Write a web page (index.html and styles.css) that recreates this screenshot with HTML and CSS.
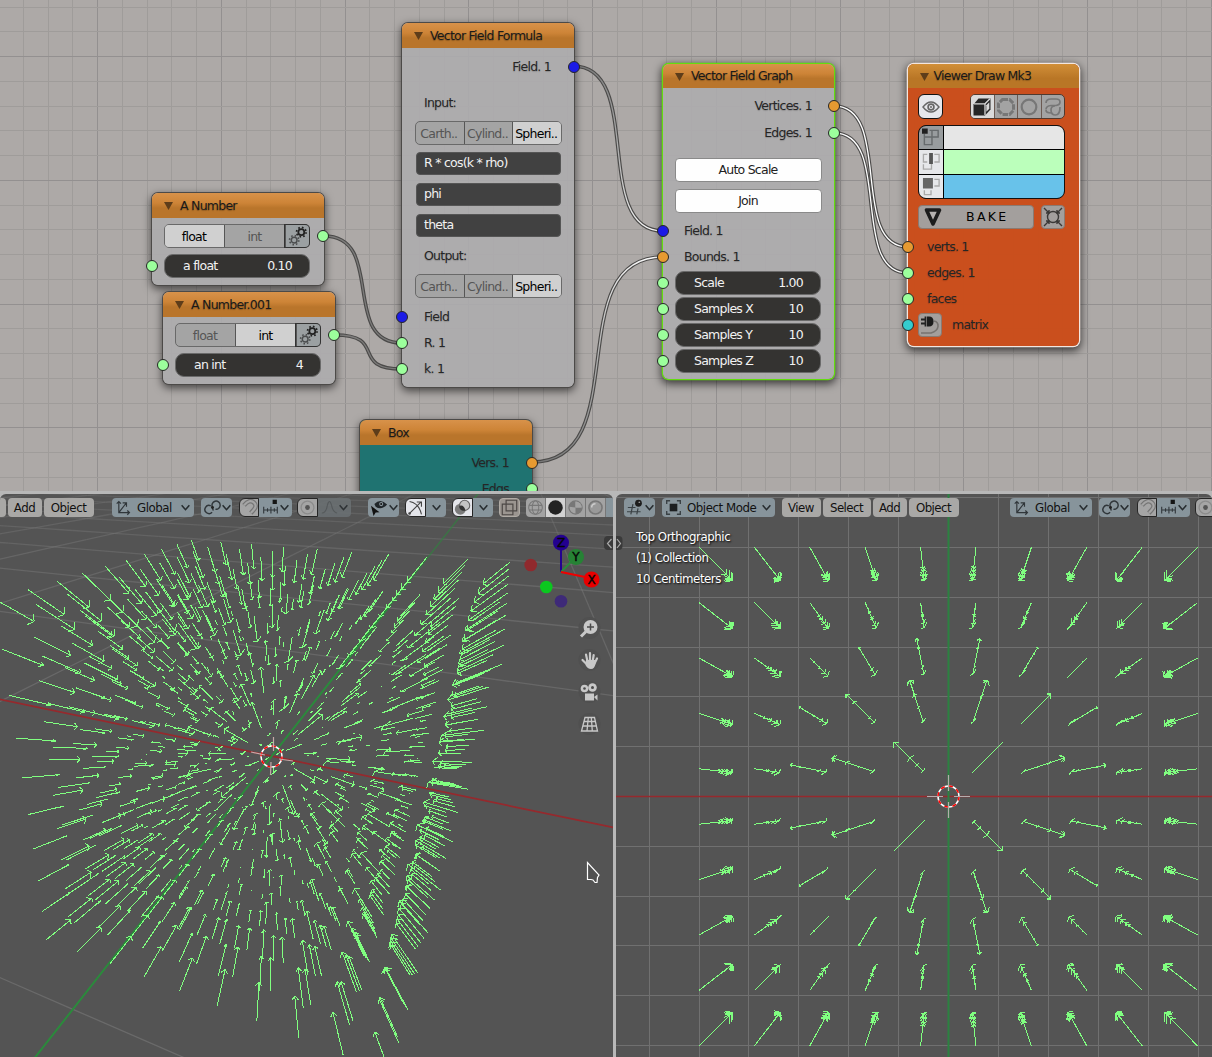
FILE: index.html
```html
<!DOCTYPE html>
<html lang="en">
<head>
<meta charset="utf-8">
<title>Vector Field</title>
<link rel="stylesheet" href="styles.css">
</head>
<body>
<svg class="defs" aria-hidden="true">
  <symbol id="i-gears" viewBox="0 0 20 20"><g fill="none" stroke="#222"><circle cx="13" cy="6.5" r="2.7" stroke-width="1.6"/><circle cx="13" cy="6.5" r="4.3" stroke-width="1.6" stroke-dasharray="1.5 1.88"/></g><g fill="none" stroke="#4b4d4e"><circle cx="6.500" cy="13.8" r="2.6" stroke-width="1.3"/><circle cx="6.500" cy="13.8" r="4.2" stroke-width="1.5" stroke-dasharray="1.4 1.9"/></g></symbol>
  <symbol id="i-eye" viewBox="0 0 20 20"><path d="M2 10q8-10 16 0q-8 10-16 0z" fill="none" stroke="#666" stroke-width="1.4"/><circle cx="10" cy="10" r="2.9" fill="none" stroke="#666" stroke-width="1.7"/><circle cx="10" cy="10" r="1" fill="#666"/></symbol>
  <symbol id="i-cube" viewBox="0 0 20 20"><path d="M1.500 7.500 6.500 1.500H18.500V12.500L13 18.500H1.500z" fill="#262626"/><path d="M2 6.800H13V18M13 6.800 18 1.800" fill="none" stroke="#dadada" stroke-width="1.300"/><path d="M14.300 8.300 17.300 5.300v6.500l-3 3z" fill="#dadada"/></symbol>
  <symbol id="i-oct" viewBox="0 0 20 20"><path d="M6.500 2.500h7L17.500 6.500v7L13.500 17.500h-7L2.500 13.500v-7z" fill="none" stroke="#777" stroke-width="3" stroke-dasharray="5.500 1.200"/></symbol>
  <symbol id="i-circ" viewBox="0 0 20 20"><circle cx="10" cy="10" r="7.300" fill="none" stroke="#777" stroke-width="2.200"/></symbol>
  <symbol id="i-curve" viewBox="0 0 20 20"><path d="M3 6q0-4 5-4h5q4 0 4 3t-4 3.500H8q-5 .5-5 4M17 10q0 8-4.500 8T8 13q0-4 4-4M3 13q0 3 5 3" fill="none" stroke="#777" stroke-width="1.700"/></symbol>
  <symbol id="i-verts" viewBox="0 0 20 20"><path d="M8 2.500h9v7H2.500v8h8v-15M2.500 6v4" fill="none" stroke="#666a6c" stroke-width="1.500"/><path d="M0 .500h6v5.500H0z" fill="#1f1f1f"/></symbol>
  <symbol id="i-edges" viewBox="0 0 20 20"><path d="M5.500 2.500h-4v8h4M13 2.500h5v8h-5M1.500 13v5H10v-6" fill="none" stroke="#aaa" stroke-width="1.400"/><path d="M7.500 1h4v11.500h-4z" fill="#555"/></symbol>
  <symbol id="i-faces" viewBox="0 0 20 20"><path d="M13 2.500h5v7h-5M2.500 14v4.500h7V14" fill="none" stroke="#aaa" stroke-width="1.400"/><path d="M1 1h10.500v11H1z" fill="#666"/></symbol>
  <symbol id="i-bake" viewBox="0 0 20 20"><path d="M3.500 3h13L10 17z" fill="#b5b1af" stroke="#1c1c1c" stroke-width="3.600" stroke-linejoin="round"/></symbol>
  <symbol id="i-target" viewBox="0 0 20 20"><g fill="none" stroke="#3a3836" stroke-width="1.400"><circle cx="10" cy="10" r="5.500"/><path d="M1 1l5 5M19 1l-5 5M1 19l5-5M19 19l-5-5M6 3v3H3M14 3v3h3M6 17v-3H3M14 17v-3h3"/></g></symbol>
  <symbol id="i-plug" viewBox="0 0 20 20"><path d="M1 4.500h4M1 8.500h4M5.500 1.500v10" stroke="#222" stroke-width="1.800"/><path d="M7 1.500h2q4.500 0 4.500 5t-4.500 5H7z" fill="#1c1c1c"/><path d="M14 6q4.500 1 4 5.500t-7 6.500H1" fill="none" stroke="#777370" stroke-width="1.600"/></symbol>
  <symbol id="i-axes" viewBox="0 0 20 20"><path d="M4.500 3v13H17M2 5.500 4.500 3 7 5.500M14.500 13.500 17 16l-2.500 2.500M4.500 16 13 5M9 4.500l4.500 0V9" fill="none" stroke="#30363a" stroke-width="1.400"/></symbol>
  <symbol id="i-pivot" viewBox="0 0 20 20"><g fill="none" stroke="#30363a" stroke-width="1.700"><path d="M9.500 15.500A4.800 4.800 0 1 1 8 8M11 13.500q-1-2-1-3.500"/><path d="M10 9.500A4.800 4.800 0 1 1 13.500 12"/></g><circle cx="10" cy="10" r="1.700" fill="#222"/></symbol>
  <symbol id="i-magnet" viewBox="0 0 20 20"><path d="M3.500 7.500C8 2 12 1 15.500 4.500S17 11 11.500 16.500" fill="none" stroke="#757575" stroke-width="5.400"/><path d="M3.500 7.500C8 2 12 1 15.500 4.500S17 11 11.500 16.500" fill="none" stroke="#a5a5a5" stroke-width="2.600"/></symbol>
  <symbol id="i-snap" viewBox="0 0 20 20"><path d="M2 9v8M6.500 11v4M10.500 9v8M14.500 11v4M18 9v8M2 13h16" stroke="#30363a" stroke-width="1.300"/><path d="M12.500 1h5v5h-5z" fill="#151515"/></symbol>
  <symbol id="i-prop" viewBox="0 0 20 20"><circle cx="10" cy="10" r="7.500" fill="none" stroke="#8c8c8c" stroke-width="1.500"/><circle cx="10" cy="10" r="2.800" fill="#555"/></symbol>
  <symbol id="i-fall" viewBox="0 0 20 20"><path d="M1 16.500q4.500 0 6-7T10 3t3 6.500 6 7" fill="none" stroke="#555a5c" stroke-width="1.300"/></symbol>
  <symbol id="i-vis" viewBox="0 0 20 20"><path d="M4 6Q11-1.500 19 6.500 12 14 5.500 9z" fill="#20262a"/><circle cx="12" cy="6" r="2.400" fill="#8a979e"/><circle cx="12" cy="6" r="1.200" fill="#111"/><path d="M0 8l10 7.500-4.500.5L3 20z" fill="#111"/></symbol>
  <symbol id="i-gizmo" viewBox="0 0 20 20"><path d="M3 3q11 2 14 15M3 17 16 4M11.500 3.500H17V9" fill="none" stroke="#444" stroke-width="1.300"/><circle cx="3" cy="17" r="1.500" fill="#444"/></symbol>
  <symbol id="i-over" viewBox="0 0 20 20"><circle cx="7.500" cy="12" r="6.500" fill="#7a7a7a"/><circle cx="12.500" cy="7.500" r="6" fill="#c4c4c4" stroke="#666" stroke-width="1.300"/><path d="M6.500 8q5-2 7 5.500-4 1-6-1.500t-1-4z" fill="#333"/></symbol>
  <symbol id="i-xray" viewBox="0 0 20 20"><g fill="none" stroke="#4d4846" stroke-width="1.400"><path d="M6 1.500h12.500V14H6zM1.500 6H14v12.500H1.500z"/></g></symbol>
  <symbol id="i-wire" viewBox="0 0 20 20"><g fill="none" stroke="#777" stroke-width="1.200"><circle cx="10" cy="10" r="8"/><ellipse cx="10" cy="10" rx="3.800" ry="8"/><path d="M2.500 7.500h15M2.500 13h15"/></g></symbol>
  <symbol id="i-solid" viewBox="0 0 20 20"><circle cx="10" cy="10" r="8.500" fill="#222"/></symbol>
  <symbol id="i-mat" viewBox="0 0 20 20"><circle cx="10" cy="10" r="7.700" fill="#a3a3a3" stroke="#777" stroke-width="1.500"/><path d="M10 2.500V10h7.500a7.500 7.500 0 0 1-7.500 7.500Q10 13 10 10L2.500 9A7.500 7.500 0 0 1 10 2.500z" fill="#777"/><path d="M10 3v7h7.500A7.500 7.500 0 0 0 10 3z" fill="#a3a3a3"/></symbol>
  <symbol id="i-rend" viewBox="0 0 20 20"><circle cx="10" cy="10" r="7.700" fill="#999" stroke="#777" stroke-width="1.800"/><path d="M5.500 10q0-4.500 4.500-4.500" fill="none" stroke="#ccc" stroke-width="1.800"/></symbol>
  <symbol id="i-view" viewBox="0 0 20 20"><path d="M7 6 4.500 18M13 11l-1.500 7M1 10h9M0 15h16" stroke="#3a4145" stroke-width="1.400" fill="none"/><circle cx="13.500" cy="5" r="4" fill="#1c1c1c"/><circle cx="14.500" cy="3.800" r="1" fill="#999"/></symbol>
  <symbol id="i-obj" viewBox="0 0 20 20"><path d="M5.500 5.500h9v9h-9z" fill="#1c1f21"/><path d="M2 6V2h4M14 2h4v4M18 14v4h-4M6 18H2v-4" fill="none" stroke="#3a4145" stroke-width="1.600"/></symbol>
  <symbol id="i-down" viewBox="0 0 10 10"><path d="M1.500 3 5 7l3.500-4" fill="none" stroke="#272c2f" stroke-width="1.400"/></symbol>
</svg>

<main class="screen">
  <section class="node-editor">
    <svg class="wires" id="nodeGrid" viewBox="0 0 1212 491"></svg>
    <svg class="wires" viewBox="0 0 1212 491">
      <defs>
        <linearGradient id="w1" gradientUnits="userSpaceOnUse" x1="573" y1="66" x2="663" y2="231"><stop offset="0" stop-color="#777"/><stop offset=".55" stop-color="#b5b5b5"/><stop offset="1" stop-color="#fff"/></linearGradient>
        <linearGradient id="w2" gradientUnits="userSpaceOnUse" x1="532" y1="462" x2="663" y2="257"><stop offset="0" stop-color="#777"/><stop offset=".55" stop-color="#b5b5b5"/><stop offset="1" stop-color="#fff"/></linearGradient>
      </defs>
      <g fill="none" stroke="#4b4a49" stroke-width="3.600">
        <path d="M324 236C386 236 340 343 402 343"/><path d="M335 335C388 335 349 369 402 369"/>
        <path d="M573 66C645 66 591 231 663 231"/><path d="M532 462C637 462 558 257 663 257"/>
        <path d="M834 106C893 106 849 247 908 247"/><path d="M834 133C893 133 849 273 908 273"/>
      </g>
      <g fill="none" stroke="#7d7c7b" stroke-width="1.300">
        <path d="M324 236C386 236 340 343 402 343"/><path d="M335 335C388 335 349 369 402 369"/>
        <path stroke="url(#w1)" d="M573 66C645 66 591 231 663 231"/><path stroke="url(#w2)" d="M532 462C637 462 558 257 663 257"/>
        <path stroke="#fff" d="M834 106C893 106 849 247 908 247"/><path stroke="#fff" d="M834 133C893 133 849 273 908 273"/>
      </g>
    </svg>

    <article class="node n-float">
      <h2 class="title">A Number</h2>
      <div class="seg m6"><i class="sock out green"></i><span class="on w59">float</span><span class="w61">int</span><span class="gear"><svg><use href="#i-gears"/></svg></span></div>
      <div class="slider m6"><i class="sock in green"></i><b>a float</b><b>0.10</b></div>
    </article>

    <article class="node n-int">
      <h2 class="title">A Number.001</h2>
      <div class="seg m6"><i class="sock out green"></i><span class="w59">float</span><span class="on w61">int</span><span class="gear"><svg><use href="#i-gears"/></svg></span></div>
      <div class="slider m6"><i class="sock in green"></i><b>an int</b><b>4</b></div>
    </article>

    <article class="node n-formula">
      <h2 class="title">Vector Field Formula</h2>
      <div class="row right m9">Field. 1<i class="sock out blue"></i></div>
      <div class="row m16">Input:</div>
      <div class="seg tri m8"><span>Carth..</span><span>Cylind..</span><span class="on">Spheri..</span></div>
      <div class="field m7">R * cos(k * rho)</div>
      <div class="field m8">phi</div>
      <div class="field m8">theta</div>
      <div class="row m9">Output:</div>
      <div class="seg tri m8"><span>Carth..</span><span>Cylind..</span><span class="on">Spheri..</span></div>
      <div class="row m9"><i class="sock in blue"></i>Field</div>
      <div class="row m6"><i class="sock in green"></i>R. 1</div>
      <div class="row m6"><i class="sock in green"></i>k. 1</div>
    </article>

    <article class="node n-box">
      <h2 class="title">Box</h2>
      <div class="row right m8">Vers. 1<i class="sock out orange"></i></div>
      <div class="row right m6">Edgs<i class="sock out green"></i></div>
    </article>

    <article class="node n-graph">
      <h2 class="title">Vector Field Graph</h2>
      <div class="row right m8">Vertices. 1<i class="sock out orange"></i></div>
      <div class="row right m7">Edges. 1<i class="sock out green"></i></div>
      <div class="toggle m15">Auto Scale</div>
      <div class="toggle m7">Join</div>
      <div class="row m8"><i class="sock in blue"></i>Field. 1</div>
      <div class="row m6"><i class="sock in orange"></i>Bounds. 1</div>
      <div class="slider m4"><i class="sock in green"></i><b>Scale</b><b>1.00</b></div>
      <div class="slider m2"><i class="sock in green"></i><b>Samples X</b><b>10</b></div>
      <div class="slider m2"><i class="sock in green"></i><b>Samples Y</b><b>10</b></div>
      <div class="slider m2"><i class="sock in green"></i><b>Samples Z</b><b>10</b></div>
    </article>

    <article class="node n-viewer">
      <h2 class="title">Viewer Draw Mk3</h2>
      <div class="tools m6"><span class="eye"><svg><use href="#i-eye"/></svg></span>
        <span class="modes"><span class="on"><svg><use href="#i-cube"/></svg></span><span><svg><use href="#i-oct"/></svg></span><span><svg><use href="#i-circ"/></svg></span><span><svg><use href="#i-curve"/></svg></span></span></div>
      <div class="colors m7">
        <span class="dim"><svg><use href="#i-verts"/></svg></span><span class="c1"></span>
        <span><svg><use href="#i-edges"/></svg></span><span class="c2"></span>
        <span><svg><use href="#i-faces"/></svg></span><span class="c3"></span>
      </div>
      <div class="tools m6"><span class="bake"><svg><use href="#i-bake"/></svg><em>BAKE</em></span><span class="sq"><svg><use href="#i-target"/></svg></span></div>
      <div class="row m8"><i class="sock in orange"></i>verts. 1</div>
      <div class="row m6"><i class="sock in green"></i>edges. 1</div>
      <div class="row m6"><i class="sock in green"></i>faces</div>
      <div class="row matrix m4"><i class="sock in teal"></i><span class="sq"><svg><use href="#i-plug"/></svg></span>matrix</div>
    </article>
  </section>

  <section class="viewport left">
    <svg class="scene" id="persp" viewBox="0 494 613 563">
      <g id="floor" fill="none" stroke="#848484" stroke-width="1.300"></g>
      <path id="axX" stroke="#96292d" stroke-width="1.700"/><path id="axY" stroke="#2b8a3c" stroke-width="2"/><path id="axYfar" stroke="#2b8a3c" stroke-width="1.600" opacity=".55"/>
      <path id="arrows3d" class="arrows"/>
      <g fill="none" stroke-width="1.500"><circle cx="271.500" cy="756.500" r="10.500" stroke="#fff"/><circle cx="271.500" cy="756.500" r="10.500" stroke="#f00" stroke-dasharray="4.100 4.147"/></g>
      <path d="M273.500 737v14M271 762l-.500 13M251 752l14 3M279 759l14 2" stroke="#c4aaaa" stroke-width="1.200"/>
      <g stroke-width="2"><path d="M561 572V548" stroke="#230090"/><path d="M561 572l11-11" stroke="#2b8a3c"/><path d="M561 572l24 5" stroke="#f00000"/></g>
      <circle cx="530.700" cy="565" r="6.300" fill="#90292d"/><circle cx="546.300" cy="587" r="6.300" fill="#0bc71f"/><circle cx="561" cy="601.300" r="6.300" fill="#3e2a78"/>
      <circle cx="561" cy="542.700" r="8" fill="#230090"/><circle cx="576" cy="557" r="8" fill="#268235"/><circle cx="591.500" cy="579.500" r="8" fill="#e80000"/>
      <g class="giz"><text x="561" y="547">Z</text><text x="576" y="561">Y</text><text x="591.500" y="584">X</text></g>
      <g fill="#505050"><circle cx="589.500" cy="628" r="11"/><circle cx="589.500" cy="660" r="11"/><circle cx="589.500" cy="692" r="11"/><circle cx="589.500" cy="724" r="11"/></g>
      <circle cx="590.500" cy="627" r="7" fill="#c8c8c8"/><path d="M586 631.500l-5 5" stroke="#c8c8c8" stroke-width="3"/><path d="M590.500 623.500v7M587 627h7" stroke="#4a4a4a" stroke-width="1.500"/>
      <path d="M582.500 660l4 4M586 654.500l1.500 7M590 653v8M593.700 655l-1 6M597 658.500l-2.500 5" stroke="#c8c8c8" stroke-width="2.200" stroke-linecap="round"/><path d="M586 660h9.500v4q-1 5-4.500 5t-5.500-4z" fill="#c8c8c8"/>
      <g fill="#c8c8c8"><circle cx="584.500" cy="688.500" r="3.800"/><circle cx="592.500" cy="687.500" r="4.300"/><path d="M585 693.500h9v7h-9zM594 697l3.500-2.500v6z"/></g><circle cx="584.500" cy="688.500" r="1.300" fill="#4a4a4a"/><circle cx="592.500" cy="687.500" r="1.500" fill="#4a4a4a"/>
      <path d="M585 717.500h9.500l3 13.500h-16zM584 721.500h11.500M583 726h14M588.300 717.500l-1.300 13.500M591.300 717.500l1 13.500" fill="none" stroke="#c8c8c8" stroke-width="1.300"/>
      <path d="M587.500 862.500v17h3.500l2 .500 2 2.500h2l.500-5 1.500-2.500z" fill="#505050" stroke="#fff" stroke-width="1.200"/>
      <path d="M613 536h-5q-4 0-4 4v6q0 4 4 4h5z" fill="#3a3a3a"/><path d="M611.500 539l-4 4.500 4 4.500" fill="none" stroke="#aaa" stroke-width="1.200"/>
    </svg>
    <header class="bar">
      <span class="btn edge"></span><span class="btn wAdd">Add</span><span class="btn wObj">Object</span>
      <span class="sel wGlob"><svg><use href="#i-axes"/></svg><b>Global</b><svg class="dn"><use href="#i-down"/></svg></span>
      <span class="sel wLink"><svg><use href="#i-pivot"/></svg><svg class="dn"><use href="#i-down"/></svg></span>
      <span class="ico dark wMag"><svg><use href="#i-magnet"/></svg></span><span class="sel joinL wSnap"><svg><use href="#i-snap"/></svg><svg class="dn"><use href="#i-down"/></svg></span>
      <span class="ico dark wProp"><svg><use href="#i-prop"/></svg></span><span class="sel joinL off wFall"><svg><use href="#i-fall"/></svg><svg class="dn"><use href="#i-down"/></svg></span>
      <span class="sel wVis"><svg><use href="#i-vis"/></svg><svg class="dn"><use href="#i-down"/></svg></span>
      <span class="ico lit wGiz"><svg><use href="#i-gizmo"/></svg></span><span class="sel joinL wDd"><svg class="dn"><use href="#i-down"/></svg></span>
      <span class="ico lit wOver"><svg><use href="#i-over"/></svg></span><span class="sel joinL wDd"><svg class="dn"><use href="#i-down"/></svg></span>
      <span class="ico wXray"><svg><use href="#i-xray"/></svg></span>
      <span class="shade"><span><svg><use href="#i-wire"/></svg></span><span class="on"><svg><use href="#i-solid"/></svg></span><span><svg><use href="#i-mat"/></svg></span><span><svg><use href="#i-rend"/></svg></span><span class="more"></span></span>
    </header>
  </section>

  <section class="viewport rightv">
    <svg class="scene" id="ortho" viewBox="616 494 596 563">
      <path id="grid2d" fill="none" stroke="#707070" shape-rendering="crispEdges"/>
      <path d="M616 796.500H1212" stroke="#96292d" stroke-width="1.400"/><path d="M948.500 494V1057" stroke="#2b8240" stroke-width="2"/>
      <path id="arrows2d" class="arrows"/>
      <g fill="none" stroke-width="1.500"><circle cx="948.500" cy="796.500" r="10.500" stroke="#fff"/><circle cx="948.500" cy="796.500" r="10.500" stroke="#f00" stroke-dasharray="4.100 4.147"/></g>
      <path d="M948.500 775v16M948.500 802v16M927 796.500h16M954 796.500h16" stroke="#b5adad" stroke-width="1.200"/>
      <path d="M616 536h2.500q4 0 4 4v6q0 4-4 4H616z" fill="#3a3a3a"/><path d="M617 539l3.500 4.500-3.500 4.500" fill="none" stroke="#aaa" stroke-width="1.200"/>
    </svg>
    <header class="bar">
      <span class="sel wEd"><svg><use href="#i-view"/></svg><svg class="dn"><use href="#i-down"/></svg></span>
      <span class="sel wMode"><svg><use href="#i-obj"/></svg><b>Object Mode</b><svg class="dn"><use href="#i-down"/></svg></span>
      <span class="btn wView">View</span><span class="btn wSel">Select</span><span class="btn wAdd">Add</span><span class="btn wObj">Object</span>
      <span class="sel wGlob far"><svg><use href="#i-axes"/></svg><b>Global</b><svg class="dn"><use href="#i-down"/></svg></span>
      <span class="sel wLink"><svg><use href="#i-pivot"/></svg><svg class="dn"><use href="#i-down"/></svg></span>
      <span class="ico dark wMag"><svg><use href="#i-magnet"/></svg></span><span class="sel joinL wSnap"><svg><use href="#i-snap"/></svg><svg class="dn"><use href="#i-down"/></svg></span>
      <span class="ico dark wProp"><svg><use href="#i-prop"/></svg></span>
    </header>
    <div class="info"><p>Top Orthographic</p><p>(1) Collection</p><p>10 Centimeters</p></div>
  </section>
</main>
<script src="scene.js"></script>
</body>
</html>
```
FILE: styles.css
```css
*{box-sizing:border-box}
body{margin:0;background:#b8b8b8;font-family:"DejaVu Sans",sans-serif;font-size:12.5px;color:#1a1a1a}
h2,p{margin:0;font-weight:400}
b,em,i{font-weight:400;font-style:normal}
.defs{position:absolute;width:0;height:0}
.screen{width:1212px;height:1057px;display:grid;grid-template:491px 563px / 613px 596px;gap:3px;overflow:hidden}

/* node editor */
.node-editor{grid-column:1 / 3;position:relative;overflow:hidden;background:#ada9a7;letter-spacing:-.75px}
.wires{position:absolute;inset:0;width:1212px;height:491px}
.node{position:absolute;width:174px;display:flex;flex-direction:column;padding:0 12px;border-radius:6px;
  background:rgba(173,172,174,.9);box-shadow:0 0 0 1px #4c4a48,0 3px 8px 1px rgba(0,0,0,.6)}
.n-float{left:152px;top:193px;height:92px;width:172px}
.n-int{left:163px;top:292px;height:92px;width:172px}
.n-formula{left:402px;top:23px;height:364px;width:172px}
.n-graph{left:663px;top:64px;height:315px;width:171px;padding:0 12px;box-shadow:0 0 0 1.3px #63dc10,0 3px 8px 2px rgba(0,0,0,.65)}
.n-viewer{left:908px;top:64px;height:282px;width:171px;padding:0 14px 0 10px;background:rgba(202,78,27,.98);box-shadow:0 0 0 1.3px #f3e6df,0 3px 8px 2px rgba(0,0,0,.65)}
.n-box{left:360px;top:420px;height:120px;background:#1f7371;width:172px}
.title{height:25px;padding-left:28px;border-radius:6px 6px 0 0;font-size:12.5px;line-height:25px;flex:none;position:relative;
  background:linear-gradient(#d8924a,#cd8437 40%,#b9752b 60%);white-space:nowrap;text-shadow:0 1px 1px rgba(0,0,0,.25)}
.node>.title{margin:0 -12px}
.n-graph>.title{height:24px;line-height:23px}
.n-viewer>.title{height:24px;line-height:23px;margin:0 -14px 0 -10px;padding-left:25.5px;background:linear-gradient(#d18f38,#b97626 60%)}
.title::before{content:"";position:absolute;left:12px;top:9px;width:9px;height:8px;background:#5e3d1a;clip-path:polygon(0 0,100% 0,50% 100%)}
.row{height:20px;line-height:20px;padding-left:10px;position:relative;text-shadow:0 1px 1px rgba(0,0,0,.18);flex:none;color:#262626}
.n-viewer .row:not(.matrix){padding-left:9px}
.right,.n-graph .right{text-align:right;padding:0 11px 0 0}
.n-graph .right{padding-right:10px}
.n-graph .row:not(.right){padding-left:9px}
.sock{position:absolute;width:12px;height:12px;border:1px solid #262626;border-radius:50%;top:50%;margin-top:-6px}
.in{left:-18px}.out{right:-18px}
.n-viewer .in{left:-16px}
.green{background:#9cff9c}.blue{background:#1b1be6}.orange{background:#e69a31}.teal{background:#35cccf}
.m2{margin-top:2px}.m4{margin-top:4px}.m6{margin-top:6px}.m7{margin-top:7px}.m8{margin-top:8px}.m9{margin-top:9px}.m15{margin-top:15px}.m16{margin-top:16px}
.seg{height:24px;display:flex;position:relative;flex:none;border:1px solid #696969;border-radius:5px;background:#a4a4a4;color:#555;width:146px}
.seg .sock{right:-20px}
.seg span{display:flex;align-items:center;justify-content:center;border-left:1px solid #565656;flex:1;padding-right:1px}
.seg span:first-of-type{border-left:0;border-radius:4px 0 0 4px}
.seg span:last-child{border-radius:0 4px 4px 0}
.seg .on{background:#d0d0d0;color:#000}
.seg .w59{flex:0 0 59px}.seg .w61{flex:0 0 61px}
.seg .gear{background:#9ba0a2;box-shadow:0 0 0 1px #333;padding:0}
.gear svg{width:22px;height:22px}
.tri{margin-left:1px;width:147px}
.tri span{padding-right:2px}
.slider{height:24px;border-radius:9px;border:1px solid #6a6a6a;background:#343331;color:#f2f2f2;display:flex;justify-content:space-between;align-items:center;
  padding:0 17px 1px 18px;position:relative;width:146px;flex:none}
.slider .in{left:-19px}
.field{height:23px;line-height:20px;border-radius:4px;border:1px solid #555;background:#414141;color:#f2f2f2;padding-left:7px;width:145px;margin-left:2px;flex:none}
.toggle{height:24px;line-height:22px;border:1px solid #8a8a8a;border-radius:4px;background:#fefefe;text-align:center;color:#222;width:147px;padding-right:1px;flex:none}
.tools{display:flex;justify-content:space-between;flex:none;height:24px}
.tools svg,.modes svg,.sq svg{width:20px;height:20px}
.eye{width:25px;height:25px;border:1px solid #111;border-radius:6px;background:#e6e7eb;display:grid;place-items:center}
.modes{display:flex;width:95px;height:25px;border:1px solid #4f3a30;border-radius:5px;overflow:hidden;background:#a3a3a3}
.modes>span{flex:1;display:grid;place-items:center;border-left:1px solid #6b5a52}
.modes>.on{background:#dadada;border:0}
.colors{display:grid;grid-template-columns:24px 1fr;grid-template-rows:repeat(3,1fr);column-gap:1px;row-gap:1px;height:74px;background:#000;border:1px solid #111;border-radius:8px;overflow:hidden;flex:none}
.colors>span{background:#e6e7ea;display:grid;place-items:center}
.colors svg{width:19px;height:19px}
.colors .dim{background:#989c9e}
.colors .c1{background:#e6e6e6}.colors .c2{background:#bbffbb}.colors .c3{background:#68c2ea}
.bake,.sq{background:#a39f9d;border:1px solid #8a7a72;border-radius:4px;height:24px}
.bake{width:116px;display:flex;align-items:center;padding-left:4px;color:#000}
.bake em{letter-spacing:2.3px;margin-left:23px;padding-bottom:2px}
.sq{width:24px;display:grid;place-items:center}
.matrix{height:24px;line-height:24px;display:flex;padding-left:0}
.matrix .sq{margin-right:10px}

/* 3D viewports */
.viewport{position:relative;overflow:hidden;background:#545454;border-radius:6px 6px 0 0}
.scene{position:absolute;inset:0;width:100%;height:100%}
.arrows{fill:none;stroke:#80ff80;stroke-width:1;shape-rendering:crispEdges}
.giz{font-size:12px;text-anchor:middle;fill:#060606;stroke:#060606;stroke-width:.4px}
.bar{position:relative;display:flex;height:26px;padding-top:4px;font-size:11.8px;letter-spacing:-.45px}
.bar>span{height:19px;flex:none;border-radius:4px;display:flex;align-items:center;justify-content:center;color:#111}
.bar svg{width:17px;height:17px;flex:none}
.bar .dn{width:11px;height:11px}
.bar .btn{background:#a9a8a6;margin-right:2px;padding-right:1px}
.bar .sel{background:#87949b;justify-content:space-between;padding:0 3px}
.bar .sel b{flex:1;padding-left:5px}
.bar .edge{width:6px;border-radius:0 4px 4px 0}
.wAdd{width:34px}.wObj{width:50px}.wView{width:39px}.wSel{width:48px}
.rightv .btn{letter-spacing:-.55px}
.wGlob{width:82px;margin-left:16px}
.far{margin-left:49px}
.wLink{width:31px;margin-left:7px}
.bar .ico{background:#a5a5a5}
.wMag{width:20px;margin-left:7px}
.bar .dark{border:1px solid #262626;border-radius:6px 0 0 6px}
.bar .joinL{border-radius:0 4px 4px 0}
.wSnap{width:33px}
.wProp{width:21px;margin-left:5px}
.wFall{width:33px}
.bar .off{background:#6b7174;opacity:.85}
.wVis{width:31px;margin-left:17px}
.bar .lit{background:#e4e5ea;border:1px solid #262626;border-radius:6px 0 0 6px}
.wGiz{width:21px;margin-left:6px}
.wOver{width:21px;margin-left:6px}
.bar .wDd{width:20px;justify-content:center}
.bar .wXray{width:21px;margin-left:6px;background:#9b9590;border:1px solid #b0aba5}
.bar .shade{margin-left:6px;background:#a3a3a3;gap:1px;border-radius:4px 0 0 4px;overflow:hidden}
.shade>span{width:19px;height:19px;display:grid;place-items:center;box-shadow:1px 0 0 #777}
.shade>.on{background:#d2d2d2}
.shade>.more{width:9px;background:#87949b}
.wEd{width:31px;margin-left:8px}
.wMode{width:113px;margin:0 7px}
.rightv .wMode{padding-left:3px}
.info{position:relative;padding:7px 0 0 20px;color:#fff;font-size:11.8px;line-height:21px;letter-spacing:-.45px;text-shadow:1px 1px 2px #000}
```
FILE: scene.js
```js
// Node editor backdrop: minor line every 24.75px, major every fifth.
let g = '';
for (let i = -19; i <= 30; i++) {
  const x = Math.round(468.3 + i * 24.75) + 0.5;
  g += `<path d="M${x} 0V491" stroke="${i % 5 === 0 ? '#939090' : '#9f9c9a'}"/>`;
}
for (let i = -2; i < 18; i++) {
  const y = Math.round(56 + i * 24.75) + 0.5;
  g += `<path d="M0 ${y}H1212" stroke="${i % 5 === 0 ? '#939090' : '#9f9c9a'}"/>`;
}
document.getElementById('nodeGrid').innerHTML = g;

// Perspective camera of the left viewport.
const cam = { a: 0.45398, e: 0.51842, k: 0.57155, g: 342.485, px: 182.1, py: 783.71, u: 271.81, v: 756.12 };
const ca = Math.cos(cam.a), sa = Math.sin(cam.a), ce = Math.cos(cam.e), se = Math.sin(cam.e);
const depth = p => 1 + ((-p[0] * sa + p[1] * ca) * ce - p[2] * se) * cam.k;
function persp(p) {
  const r = p[0] * ca + p[1] * sa, h = -p[0] * sa + p[1] * ca, d = depth(p);
  return [(cam.u + cam.px * (d - 1) + cam.g * r) / d, (cam.v + cam.py * (d - 1) - cam.g * (h * se + p[2] * ce)) / d];
}
const ortho = p => [948.3 + p[0] * 498.5, 796.5 - p[1] * 498.5];

const add = (a, b, s = 1) => a.map((v, i) => v + b[i] * s);
const len = a => Math.hypot(...a);
function orthogonal([x, y, z]) {
  const X = Math.abs(x), Y = Math.abs(y), Z = Math.abs(z);
  const axis = X > Y ? (X > Z ? 0 : 2) : (Y > Z ? 1 : 2);
  return axis === 0 ? [-y - z, x, x] : axis === 1 ? [y, -x - z, y] : [z, z, -x - y];
}

// Radial field: 0.1 * cos(4 * rho), sampled on a 10x10x10 lattice.
const segs = [];
for (let i = 0; i < 10; i++) for (let j = 0; j < 10; j++) for (let k = 0; k < 10; k++) {
  const p = [i, j, k].map(n => -0.5 + n / 9), rho = len(p);
  const m = 0.1 * Math.cos(4 * rho);
  const v = p.map(c => c / rho * m), size = Math.abs(m);
  const dir = v.map(c => c / size), o = orthogonal(dir), tip = add(p, v);
  segs.push([p, tip]);
  segs.push([tip, tip.map((c, n) => c + size * 0.1 * (o[n] - dir[n]))]);
  segs.push([tip, tip.map((c, n) => c + size * 0.1 * (-o[n] - dir[n]))]);
}
const draw = proj => segs.map(([a, b]) => {
  const A = proj(a), B = proj(b);
  return `M${A[0].toFixed(1)} ${A[1].toFixed(1)}L${B[0].toFixed(1)} ${B[1].toFixed(1)}`;
}).join('');
document.getElementById('arrows3d').setAttribute('d', draw(persp));
document.getElementById('arrows2d').setAttribute('d', draw(ortho));

// Floor grid, fading with distance.
function line(a, b) {
  if (depth(a) < 0.1 || depth(b) < 0.1) return '';
  const A = persp(a), B = persp(b);
  return `M${A[0].toFixed(1)} ${A[1].toFixed(1)}L${B[0].toFixed(1)} ${B[1].toFixed(1)}`;
}
let floor = '';
for (let n = -16; n <= 16; n++) {
  if (n === 0) continue;
  for (let t = -16; t < 16; t += 0.5) {
    for (const [a, b] of [[[n, t, 0], [n, t + 0.5, 0]], [[t, n, 0], [t + 0.5, n, 0]]]) {
      const d = line(a, b);
      const o = Math.max(0.04, 0.48 - 0.045 * depth(a));
      if (d) floor += `<path d="${d}" opacity="${o.toFixed(2)}"/>`;
    }
  }
}
document.getElementById('floor').innerHTML = floor;
document.getElementById('axX').setAttribute('d', line([-3, 0, 0], [2, 0, 0]));
document.getElementById('axY').setAttribute('d', line([0, -1.3, 0], [0, 2, 0]));
document.getElementById('axYfar').setAttribute('d', line([0, 2, 0], [0, 12, 0]));

let grid = '';
for (let n = -7; n <= 6; n++) grid += `M${Math.round(948 + n * 49.9) + 0.5} 494V1057M616 ${Math.round(796 + n * 49.8) + 0.5}H1212`;
document.getElementById('grid2d').setAttribute('d', grid);
```
